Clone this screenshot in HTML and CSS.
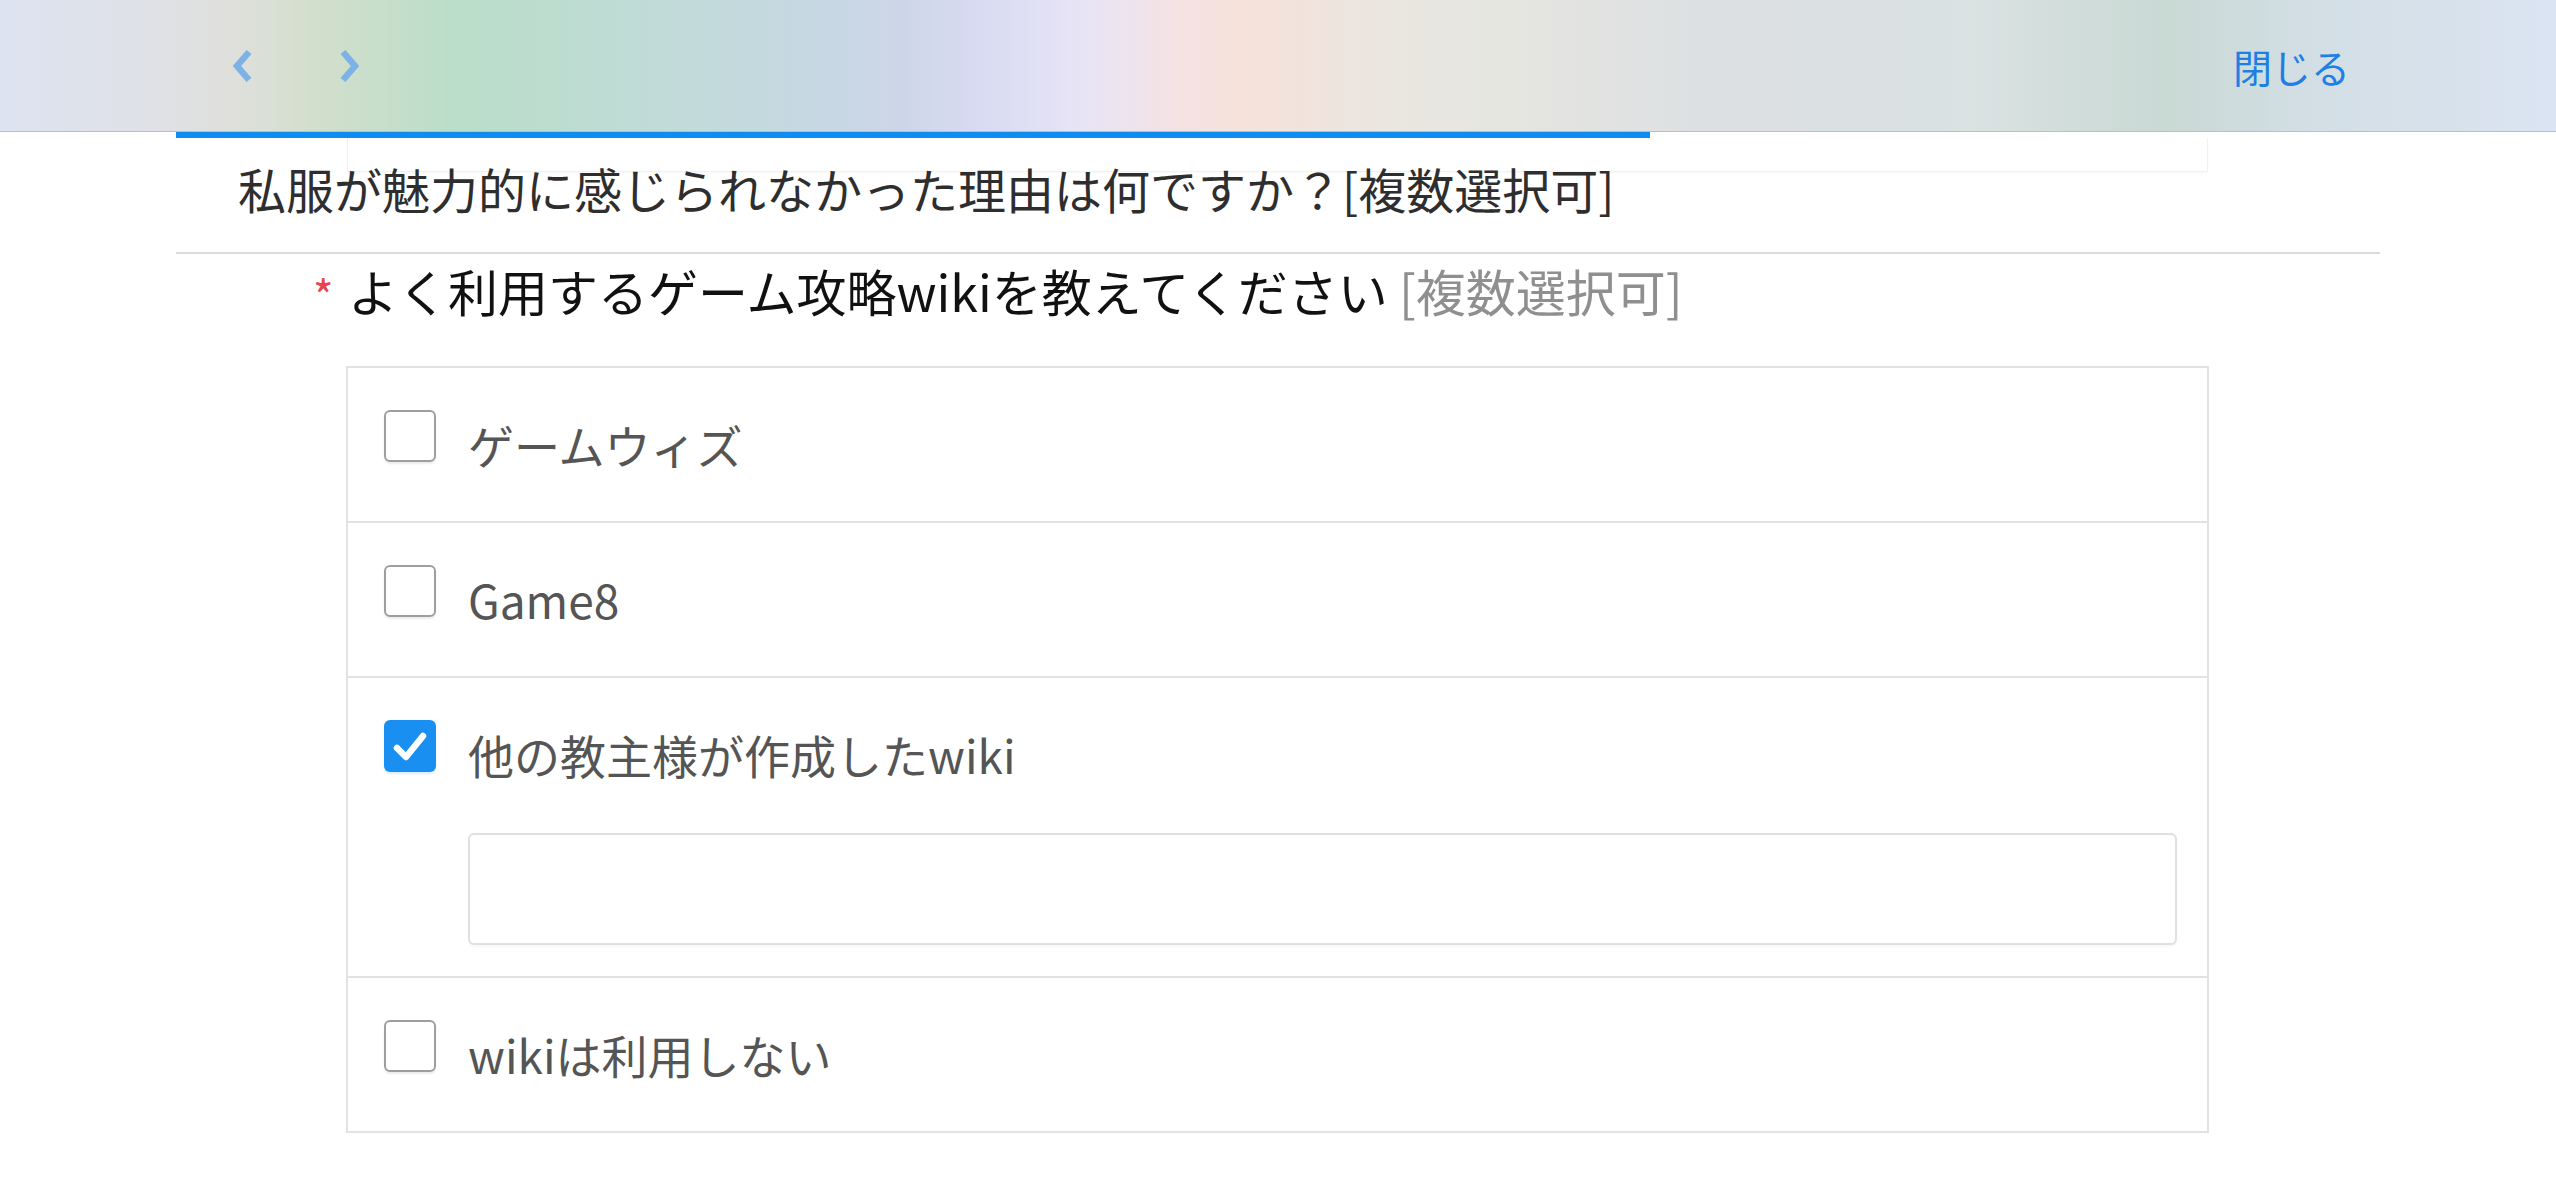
FILE: index.html
```html
<!DOCTYPE html>
<html lang="ja">
<head>
<meta charset="utf-8">
<title>アンケート</title>
<link rel="stylesheet" href="styles.css">
</head>
<body>
<header class="topbar">
  <div class="topbar-inner">
    <div class="nav">
      <button class="nav-btn" aria-label="前へ">
        <svg width="22" height="34" viewBox="0 0 22 34"><polyline points="18,3 6,17 18,31" fill="none" stroke="currentColor" stroke-width="6.5" stroke-linejoin="miter"/></svg>
      </button>
      <button class="nav-btn" aria-label="次へ">
        <svg width="22" height="34" viewBox="0 0 22 34"><polyline points="4,3 16,17 4,31" fill="none" stroke="currentColor" stroke-width="6.5" stroke-linejoin="miter"/></svg>
      </button>
    </div>
    <button class="close-btn">閉じる</button>
  </div>
</header>
<main class="page">
  <div class="progress"><div class="progress-fill" style="width:66.9%"></div></div>
  <div class="card-stub"></div>
  <div class="prev-question">私服が魅力的に感じられなかった理由は何ですか？[複数選択可]</div>
  <div class="divider"></div>
  <h2 class="question"><span class="req">*</span><span class="q-text">よく利用するゲーム攻略wikiを教えてください <span class="q-note">[複数選択可]</span></span></h2>
  <div class="options">
    <div class="option">
      <div class="option-line"><span class="checkbox"></span><span class="option-label">ゲームウィズ</span></div>
    </div>
    <div class="option">
      <div class="option-line"><span class="checkbox"></span><span class="option-label">Game8</span></div>
    </div>
    <div class="option option-with-input">
      <div class="option-line"><span class="checkbox checked"><svg width="52" height="52" viewBox="0 0 52 52"><polyline points="13,28 22,37 39,16" fill="none" stroke="#fff" stroke-width="6.5" stroke-linecap="round" stroke-linejoin="round"/></svg></span><span class="option-label">他の教主様が作成したwiki</span></div>
      <div class="other-input"></div>
    </div>
    <div class="option">
      <div class="option-line"><span class="checkbox"></span><span class="option-label">wikiは利用しない</span></div>
    </div>
  </div>
</main>
</body>
</html>
```

FILE: styles.css
```css
html, body {
  margin: 0;
  padding: 0;
  background: #ffffff;
}
body {
  font-family: "Noto Sans CJK JP", "Noto Sans", sans-serif;
  color: #222;
}
.topbar {
  height: 131px;
  border-bottom: 1px solid #b9bfc4;
  background: linear-gradient(to right,
    #dde3f1 0%,
    #dfe1e6 6%,
    #dfe0dc 9%,
    #d2dfcc 12.4%,
    #badec9 18%,
    #c0dcd6 24.7%,
    #c6d8e2 31.5%,
    #cdd6e8 35.2%,
    #d9dbf3 38.5%,
    #e8e5f5 42.5%,
    #f5e2e4 46%,
    #f6e2da 48.7%,
    #ebe6e0 54%,
    #e6e6e0 58%,
    #dde0e3 66.7%,
    #dae2e2 77.2%,
    #c9d9d4 84.7%,
    #d2dee4 90%,
    #dae3f0 98.5%,
    #dbe4f2 100%);
}
.topbar-inner {
  width: 2204px;
  height: 131px;
  margin: 0 auto;
  padding: 0 30px 0 55px;
  box-sizing: border-box;
  display: flex;
  align-items: center;
  justify-content: space-between;
}
.nav {
  display: flex;
  align-items: center;
  gap: 86px;
}
.nav-btn {
  border: 0;
  background: none;
  padding: 0;
  margin: 0;
  color: #7db2e6;
  display: flex;
  align-items: center;
  width: 22px;
  height: 34px;
}
.close-btn {
  border: 0;
  background: none;
  padding: 0;
  font-family: "Noto Sans CJK JP", sans-serif;
  font-size: 39px;
  line-height: 44px;
  color: #1d80e2;
}
.page {
  width: 2204px;
  margin: 0 auto;
}
.progress {
  height: 6px;
}
.progress-fill {
  height: 6px;
  background: #0f8cf0;
}
.card-stub {
  height: 33px;
  margin: 0 172px 0 171px;
  border: 1px solid #f1f1f1;
  border-top: 0;
  box-shadow: 0 1px 2px rgba(0,0,0,0.03);
}
.prev-question {
  padding: 0 0 48px 62px;
  font-size: 48px;
  line-height: 32px;
  color: #2e2e2e;
  white-space: nowrap;
}
.divider {
  height: 2px;
  background: #dadada;
}
.question {
  margin: 6px 0 0 0;
  padding-left: 137px;
  display: flex;
  align-items: flex-start;
  font-weight: 400;
  font-size: 50px;
  line-height: 60px;
  color: #111;
  white-space: nowrap;
}
.req {
  width: 35px;
  font-size: 44px;
  line-height: 40px;
  margin-top: 14px;
  color: #e6434c;
}
.q-note {
  color: #8f8f8f;
}
.options {
  margin: 46px 171px 0 170px;
  border: 2px solid #e2e2e2;
}
.option {
  padding: 39px 30px 40px 36px;
}
.option + .option {
  border-top: 2px solid #e2e2e2;
}
.option-with-input {
  padding-bottom: 31px;
}
.option-line {
  display: flex;
  align-items: flex-start;
}
.checkbox {
  flex: none;
  width: 52px;
  height: 52px;
  box-sizing: border-box;
  margin: 3px 32px 0 0;
  border: 2px solid #9e9e9e;
  border-radius: 6px;
  background: #fff;
  box-shadow: 0 2px 2px rgba(0,0,0,0.08);
  display: flex;
  align-items: center;
  justify-content: center;
}
.checkbox.checked {
  border: 0;
  background: #1a8ff2;
  box-shadow: 0 2px 2px rgba(26,143,242,0.15);
}
.option-label {
  font-size: 46px;
  line-height: 74px;
  color: #555555;
  white-space: nowrap;
}
.other-input {
  margin: 42px 0 0 84px;
  height: 112px;
  box-sizing: border-box;
  border: 2px solid #e0e0e0;
  border-radius: 6px;
  background: #fff;
  box-shadow: 0 2px 2px rgba(0,0,0,0.03);
}
```
